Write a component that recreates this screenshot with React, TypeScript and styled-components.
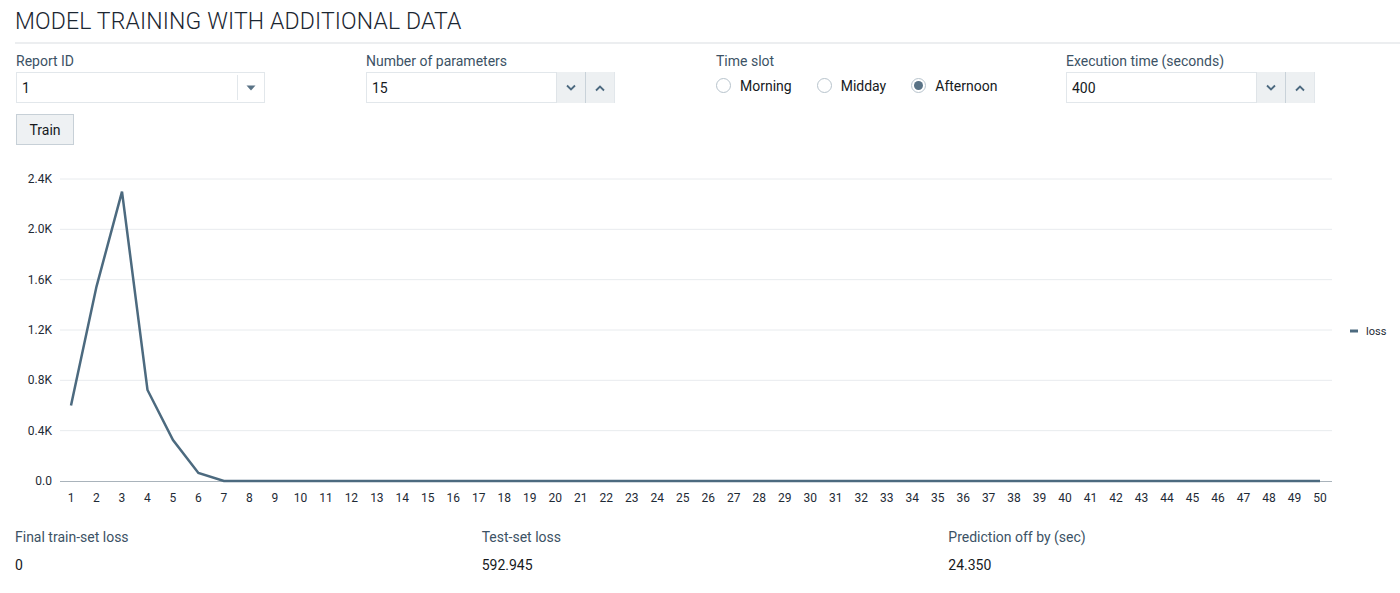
import React from "react";
import styled, { createGlobalStyle } from "styled-components";

const GlobalStyle = createGlobalStyle`
  html, body { margin: 0; padding: 0; background: #ffffff; }
  body { font-family: Roboto, "Liberation Sans", Arial, sans-serif; color: #1b1f23; }
  * { box-sizing: border-box; }
`;

const Page = styled.div`
  width: 1400px;
  height: 593px;
  overflow: hidden;
  background: #fff;
`;

const Title = styled.h1`
  margin: 0;
  padding: 8px 15px 0 15px;
  font-size: 23px;
  line-height: 27px;
  font-weight: 300;
  color: #1b2631;
  letter-spacing: 0.15px;
`;

const Rule = styled.div`
  margin: 7px 0 0 15px;
  height: 2px;
  background: #eceef0;
`;

const ControlsRow = styled.div`
  display: grid;
  grid-template-columns: repeat(4, 350px);
  margin-top: 8px;
`;

const Field = styled.div`
  padding: 0 15px;
  display: flex;
  flex-direction: column;
`;

const Label = styled.div`
  font-size: 14px;
  line-height: 18px;
  color: #3c5265;
  margin-bottom: 2px;
  padding-left: 1px;
`;

const InputBox = styled.div`
  width: 249px;
  height: 31px;
  margin-left: 1px;
  border: 1px solid #e2e7eb;
  display: flex;
  align-items: stretch;
  background: #fff;
`;

const InputText = styled.div`
  flex: 1;
  font-size: 14px;
  line-height: 30px;
  padding-left: 5px;
  color: #161a1d;
`;

const CaretCell = styled.div`
  width: 27px;
  border-left: 1px solid #e2e7eb;
  display: flex;
  align-items: center;
  justify-content: center;
  margin: 2px 0;
`;

const SpinButton = styled.div<{ $first?: boolean }>`
  width: 29px;
  background: #edf0f2;
  border-left: 1px solid ${(p) => (p.$first ? "#dfe4e8" : "#c9d2d9")};
  display: flex;
  align-items: center;
  justify-content: center;
  margin: -1px 0;
`;

const RadioGroup = styled.div`
  display: flex;
  align-items: center;
  height: 27px;
  margin-left: 1px;
`;

const RadioItem = styled.label`
  display: flex;
  align-items: center;
  font-size: 14px;
  color: #161a1d;
  margin-right: 25px;
`;

const RadioCircle = styled.span<{ $checked?: boolean }>`
  width: 15px;
  height: 15px;
  border-radius: 50%;
  border: 1px solid #b7c3cc;
  margin-right: 9px;
  display: inline-flex;
  align-items: center;
  justify-content: center;
  background: #fff;
  &::after {
    content: "";
    display: ${(p) => (p.$checked ? "block" : "none")};
    width: 9px;
    height: 9px;
    border-radius: 50%;
    background: #5a7386;
  }
`;

const ButtonRow = styled.div`
  padding: 11px 16px 0 16px;
`;

const TrainButton = styled.button`
  height: 31px;
  width: 58px;
  font-family: inherit;
  font-size: 14px;
  color: #161a1d;
  background: #eef1f3;
  border: 1px solid #c7d0d7;
  border-radius: 0;
  padding: 0;
`;

const ChartWrap = styled.div`
  margin-top: 15px;
  height: 360px;
`;

const StatsRow = styled.div`
  display: grid;
  grid-template-columns: repeat(3, 1fr);
  margin-top: 8px;
`;

const Stat = styled.div`
  padding: 0 15px;
`;

const StatLabel = styled.div`
  font-size: 14px;
  line-height: 18px;
  color: #3c5265;
`;

const StatValue = styled.div`
  font-size: 14px;
  line-height: 18px;
  color: #161a1d;
  margin-top: 10px;
`;

const Chevron = ({ up }: { up?: boolean }) => (
  <svg width="12" height="8" viewBox="0 0 12 8">
    <path
      d={up ? "M2 6.5 L6 2.5 L10 6.5" : "M2 1.5 L6 5.5 L10 1.5"}
      fill="none"
      stroke="#4d6a80"
      strokeWidth="1.8"
    />
  </svg>
);

const Caret = () => (
  <svg width="10" height="6" viewBox="0 0 10 6">
    <path d="M0.5 0.5 L9.5 0.5 L5 5.5 Z" fill="#5a7386" />
  </svg>
);

const lossData = [600, 1545, 2300, 723, 326, 64, 0];
while (lossData.length < 50) lossData.push(0);

const Chart = () => {
  const x0 = 71;
  const dx = (1320 - 71) / 49;
  const yBase = 321;
  const yScale = 302 / 2400;
  const ticks = [0, 400, 800, 1200, 1600, 2000, 2400];
  const points = lossData
    .map((v, i) => `${(x0 + i * dx).toFixed(1)},${(yBase - v * yScale).toFixed(1)}`)
    .join(" ");
  return (
    <svg width="1400" height="360" viewBox="0 0 1400 360">
      {ticks.map((t) => {
        const y = yBase - t * yScale;
        return (
          <g key={t}>
            {t !== 0 && (
              <line x1="60" x2="1332" y1={y} y2={y} stroke="#e8ebee" strokeWidth="1" />
            )}
            <text
              x="52"
              y={y + 4}
              textAnchor="end"
              fontSize="12"
              fill="#1e2a35"
              fontFamily="Roboto, 'Liberation Sans', sans-serif"
            >
              {(t / 1000).toFixed(1) + (t === 0 ? "" : "K")}
            </text>
          </g>
        );
      })}
      <line x1="60" x2="1332" y1={yBase + 0.5} y2={yBase + 0.5} stroke="#a9b3bb" strokeWidth="1" />
      {lossData.map((_, i) => (
        <text
          key={i}
          x={x0 + i * dx}
          y="342"
          textAnchor="middle"
          fontSize="12"
          fill="#1e2a35"
          fontFamily="Roboto, 'Liberation Sans', sans-serif"
        >
          {i + 1}
        </text>
      ))}
      <polyline points={points} fill="none" stroke="#4c6a7f" strokeWidth="2.5" strokeLinejoin="miter" />
      <line x1="1350" x2="1358" y1="171" y2="171" stroke="#4c6a7f" strokeWidth="3" />
      <text
        x="1366"
        y="175"
        fontSize="11"
        fill="#1e2a35"
        fontFamily="Roboto, 'Liberation Sans', sans-serif"
      >
        loss
      </text>
    </svg>
  );
};

export default function App() {
  return (
    <Page>
      <GlobalStyle />
      <Title>MODEL TRAINING WITH ADDITIONAL DATA</Title>
      <Rule />
      <ControlsRow>
        <Field>
          <Label>Report ID</Label>
          <InputBox>
            <InputText>1</InputText>
            <CaretCell>
              <Caret />
            </CaretCell>
          </InputBox>
        </Field>
        <Field>
          <Label>Number of parameters</Label>
          <InputBox>
            <InputText>15</InputText>
            <SpinButton $first>
              <Chevron />
            </SpinButton>
            <SpinButton>
              <Chevron up />
            </SpinButton>
          </InputBox>
        </Field>
        <Field>
          <Label>Time slot</Label>
          <RadioGroup>
            <RadioItem>
              <RadioCircle />
              Morning
            </RadioItem>
            <RadioItem>
              <RadioCircle />
              Midday
            </RadioItem>
            <RadioItem>
              <RadioCircle $checked />
              Afternoon
            </RadioItem>
          </RadioGroup>
        </Field>
        <Field>
          <Label>Execution time (seconds)</Label>
          <InputBox>
            <InputText>400</InputText>
            <SpinButton $first>
              <Chevron />
            </SpinButton>
            <SpinButton>
              <Chevron up />
            </SpinButton>
          </InputBox>
        </Field>
      </ControlsRow>
      <ButtonRow>
        <TrainButton>Train</TrainButton>
      </ButtonRow>
      <ChartWrap>
        <Chart />
      </ChartWrap>
      <StatsRow>
        <Stat>
          <StatLabel>Final train-set loss</StatLabel>
          <StatValue>0</StatValue>
        </Stat>
        <Stat>
          <StatLabel>Test-set loss</StatLabel>
          <StatValue>592.945</StatValue>
        </Stat>
        <Stat>
          <StatLabel>Prediction off by (sec)</StatLabel>
          <StatValue>24.350</StatValue>
        </Stat>
      </StatsRow>
    </Page>
  );
}
